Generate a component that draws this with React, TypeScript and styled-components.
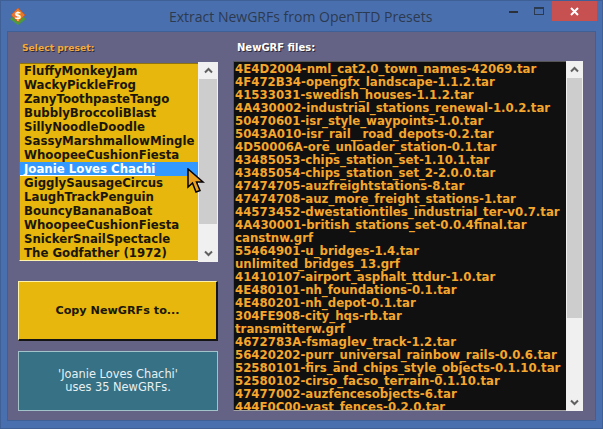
import React from "react";
import styled, { createGlobalStyle } from "styled-components";

const Global = createGlobalStyle`
  html, body { margin: 0; padding: 0; width: 603px; height: 429px; overflow: hidden; background: #4a6fae; }
  #root { width: 603px; height: 429px; }
  * { box-sizing: border-box; }
`;

const Window = styled.div`
  width: 603px; height: 429px; display: flex; flex-direction: column;
  background: #4a6fae; border: 1px solid #3f5f97; font-family: "DejaVu Sans", Verdana, sans-serif;
`;
const TitleBar = styled.div`
  height: 29px; flex: none; display: flex; align-items: flex-start; position: relative;
`;
const AppIcon = styled.svg`
  width: 18px; height: 18px; margin: 6px 0 0 8px; flex: none;
`;
const Title = styled.div`
  flex: 1; text-align: left; font-family: "Open Sans", sans-serif; font-size: 14px; line-height: 19px;
  padding: 6px 0 0 142px; color: #2c3a50; white-space: nowrap;
`;
const Controls = styled.div`
  display: flex; align-items: flex-start; margin-right: 5px;
`;
const ControlButton = styled.div<{ $close?: boolean }>`
  width: ${p => (p.$close ? "45px" : "26px")}; height: 20px; display: flex; align-items: center; justify-content: center;
  background: ${p => (p.$close ? "#c75050" : "transparent")};
`;
const Panel = styled.div`
  flex: 1; margin: 1px 6px 7px 6px; background: #646386; border: 1px solid #3f5f97;
  display: grid; grid-template-columns: 204px 350px; column-gap: 10px; padding: 8px 0 0 10px;
`;
const LeftColumn = styled.div`
  display: flex; flex-direction: column; min-height: 0;
`;
const RightColumn = styled.div`
  display: flex; flex-direction: column; padding-left: 1px;
`;
const Label = styled.div<{ $white?: boolean }>`
  height: 21px; padding-top: 1px; font-weight: 700; line-height: 14px; white-space: nowrap;
  font-size: ${p => (p.$white ? "10px" : "9.2px")};
  padding-left: 4px;
  color: ${p => (p.$white ? "#ffffff" : "#f6a93b")}; text-shadow: 1px 1px 0 #2b2b3c;
`;
const PresetBox = styled.div`
  margin-top: 1px; margin-left: 1px; width: 199px; height: 200px; display: flex; position: relative;
`;
const PresetList = styled.div`
  width: 179px; height: 198px; margin-top: 1px; background: #e7b70d; border-top: 1px solid #8c7211; border-left: 1px solid #8c7211;
  border-bottom: 1px solid #fff3b0; overflow: hidden;
`;
const Preset = styled.div<{ $selected?: boolean }>`
  height: 14px; font-size: 11.75px; font-weight: 700; line-height: 14px; padding-left: 4px; white-space: nowrap;
  color: ${p => (p.$selected ? "#ffffff" : "#1a1608")};
  background: ${p => (p.$selected ? "#3399ff" : "transparent")};
  span { border-bottom: ${p => (p.$selected ? "1px solid #fff" : "none")}; display: inline-block; height: 14px; margin-left: -4px; padding-left: 4px; }
`;
const Scrollbar = styled.div<{ $wide?: boolean }>`
  width: ${p => (p.$wide ? "17px" : "20px")}; flex: none; background: #f0f0f0; display: flex; flex-direction: column; align-items: stretch; height: 100%;
`;
const Arrow = styled.div`
  height: 17px; flex: none; display: flex; align-items: center; justify-content: center;
`;
const Thumb = styled.div<{ $h: number }>`
  height: ${p => p.$h}px; margin: 0 1px; background: #cdcdcd; flex: none;
`;
const Spacer = styled.div`
  flex: 1;
`;
const CopyButton = styled.div`
  margin-top: 19px; width: 200px; height: 60px; background: #e7b70d; border-top: 1px solid #fff3a8; border-left: 1px solid #fff3a8;
  border-right: 2px solid #141414; border-bottom: 2px solid #141414; display: flex; align-items: center; justify-content: center;
  font-size: 11.2px; font-weight: 700; color: #1a1608;
`;
const Status = styled.div`
  margin-top: 10px; width: 200px; height: 60px; background: #367185; border: 1px solid #a3c3cb;
  display: flex; align-items: center; justify-content: center; text-align: center;
  font-size: 11.4px; line-height: 13px; color: #e8f0f2;
`;
const FileBox = styled.div`
  width: 350px; height: 350px; display: flex;
`;
const FileList = styled.div`
  width: 333px; height: 350px; background: #101010; border-top: 1px solid #555; border-left: 1px solid #555; border-bottom: 1px solid #a0a0a0;
  padding: 1px 0 0 1px; overflow: hidden;
`;
const FileRow = styled.div`
  height: 13px; font-size: 11.75px; font-weight: 700; line-height: 13px; white-space: nowrap; color: #f5a62c;
`;
const Cursor = styled.svg`
  position: absolute; left: 168px; top: 106px; width: 18px; height: 26px;
`;

const presets = ["FluffyMonkeyJam","WackyPickleFrog","ZanyToothpasteTango","BubblyBroccoliBlast","SillyNoodleDoodle","SassyMarshmallowMingle","WhoopeeCushionFiesta","Joanie Loves Chachi","GigglySausageCircus","LaughTrackPenguin","BouncyBananaBoat","WhoopeeCushionFiesta","SnickerSnailSpectacle","The Godfather (1972)"];
const files = ["4E4D2004-nml_cat2.0_town_names-42069.tar","4F472B34-opengfx_landscape-1.1.2.tar","41533031-swedish_houses-1.1.2.tar","4A430002-industrial_stations_renewal-1.0.2.tar","50470601-isr_style_waypoints-1.0.tar","5043A010-isr_rail__road_depots-0.2.tar","4D50006A-ore_unloader_station-0.1.tar","43485053-chips_station_set-1.10.1.tar","43485054-chips_station_set_2-2.0.0.tar","47474705-auzfreightstations-8.tar","47474708-auz_more_freight_stations-1.tar","44573452-dwestationtiles_industrial_ter-v0.7.tar","4A430001-british_stations_set-0.0.4final.tar","canstnw.grf","55464901-u_bridges-1.4.tar","unlimited_bridges_13.grf","41410107-airport_asphalt_ttdur-1.0.tar","4E480101-nh_foundations-0.1.tar","4E480201-nh_depot-0.1.tar","304FE908-city_hqs-rb.tar","transmitterw.grf","4672783A-fsmaglev_track-1.2.tar","56420202-purr_universal_rainbow_rails-0.0.6.tar","52580101-firs_and_chips_style_objects-0.1.10.tar","52580102-cirso_facso_terrain-0.1.10.tar","47477002-auzfencesobjects-6.tar","444F0C00-vast_fences-0.2.0.tar"];

const Up = () => (
  <svg width="9" height="7" viewBox="0 0 9 7"><path d="M1 5.5 4.5 2 8 5.5" fill="none" stroke="#606060" strokeWidth="2" /></svg>
);
const Down = () => (
  <svg width="9" height="7" viewBox="0 0 9 7"><path d="M1 1.5 4.5 5 8 1.5" fill="none" stroke="#606060" strokeWidth="2" /></svg>
);

export default function App() {
  return (
    <Window>
      <Global />
      <TitleBar>
        <AppIcon viewBox="0 0 18 18">
          <path d="M9 6 17 12 9 18 1 12Z" fill="#4e9a3c" />
          <path d="M9 1 16 8 9 15 2 8Z" fill="#e9762b" stroke="#c9561b" strokeWidth="0.6" />
          <text x="9" y="11.5" textAnchor="middle" fontSize="10" fontWeight="700" fill="#fff" fontFamily="DejaVu Sans">$</text>
        </AppIcon>
        <Title>Extract NewGRFs from OpenTTD Presets</Title>
        <Controls>
          <ControlButton><svg width="9" height="3"><rect width="9" height="2" y="1" fill="#2c3038" /></svg></ControlButton>
          <ControlButton><svg width="11" height="9"><rect x="0.5" y="0.5" width="9" height="7" fill="none" stroke="#2c3a50" /><rect x="0" y="0" width="10" height="2" fill="#2c3a50" /></svg></ControlButton>
          <ControlButton $close><svg width="9" height="9"><path d="M1 1 8 8M8 1 1 8" stroke="#fff" strokeWidth="2" /></svg></ControlButton>
        </Controls>
      </TitleBar>
      <Panel>
        <LeftColumn>
          <Label>Select preset:</Label>
          <PresetBox>
            <PresetList>
              {presets.map((n, i) => (
                <Preset key={i} $selected={i === 7}><span>{n}</span></Preset>
              ))}
            </PresetList>
            <Scrollbar>
              <Arrow><Up /></Arrow>
              <Thumb $h={145} />
              <Spacer />
              <Arrow><Down /></Arrow>
            </Scrollbar>
            <Cursor viewBox="0 0 18 26">
              <path d="M1 1 1 19 5.5 15 9 24 13 22.5 9.5 14 16 14Z" fill="#eba020" stroke="#000" strokeWidth="1.5" strokeLinejoin="miter" />
            </Cursor>
          </PresetBox>
          <CopyButton>Copy NewGRFs to...</CopyButton>
          <Status>'Joanie Loves Chachi'<br />uses 35 NewGRFs.</Status>
        </LeftColumn>
        <RightColumn>
          <Label $white>NewGRF files:</Label>
          <FileBox>
            <FileList>
              {files.map((f, i) => <FileRow key={i}>{f}</FileRow>)}
            </FileList>
            <Scrollbar $wide>
              <Arrow><Up /></Arrow>
              <Thumb $h={240} />
              <Spacer />
              <Arrow><Down /></Arrow>
            </Scrollbar>
          </FileBox>
        </RightColumn>
      </Panel>
    </Window>
  );
}
